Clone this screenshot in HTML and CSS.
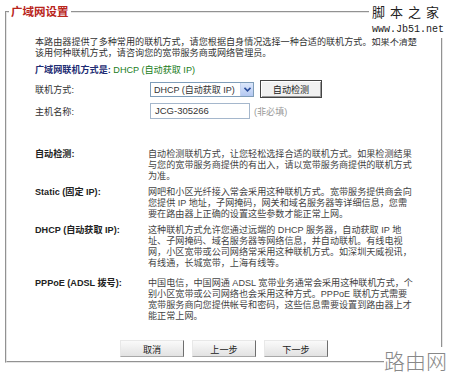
FILE: index.html
```html
<!DOCTYPE html>
<html lang="zh-CN">

<head>
    <meta charset="UTF-8">
    <link rel="stylesheet" href="styles.css">
</head>

<body>
    <div class="page">
        <fieldset class="panel">
            <legend class="panel-title">广域网设置</legend>

            <div class="panel-body">
                <p class="intro">本路由器提供了多种常用的联机方式，请您根据自身情况选择一种合适的联机方式。如果不清楚<br>该用何种联机方式，请咨询您的宽带服务商或网络管理员。</p>

                <div class="status">
                    <span class="status-label">广域网联机方式是:</span>
                    <span class="status-value">DHCP (自动获取 IP)</span>
                </div>

                <div class="form-row">
                    <label class="form-label">联机方式:</label>
                    <div class="select-box">
                        <span class="select-text">DHCP (自动获取 IP)</span>
                        <span class="select-arrow">
                            <svg width="7" height="5" viewBox="0 0 7 5"><path d="M0.5 0.8 L3.5 3.8 L6.5 0.8" fill="none" stroke="#2a4d9b" stroke-width="1.6"/></svg>
                        </span>
                    </div>
                    <button class="detect-button">自动检测</button>
                </div>

                <div class="form-row">
                    <label class="form-label">主机名称:</label>
                    <div class="text-box">JCG-305266</div>
                    <span class="hint">(非必填)</span>
                </div>

                <div class="help">
                    <div class="help-label">自动检测:</div>
                    <div class="help-text">自动检测联机方式，让您轻松选择合适的联机方式。如果检测结果<br>与您的宽带服务商提供的有出入，请以宽带服务商提供的联机方式<br>为准。</div>

                    <div class="help-label">Static (固定 IP):</div>
                    <div class="help-text">网吧和小区光纤接入常会采用这种联机方式。宽带服务提供商会向<br>您提供 IP 地址，子网掩码，网关和域名服务器等详细信息，您需<br>要在路由器上正确的设置这些参数才能正常上网。</div>

                    <div class="help-label">DHCP (自动获取 IP):</div>
                    <div class="help-text">这种联机方式允许您通过远端的 DHCP 服务器，自动获取 IP 地<br>址、子网掩码、域名服务器等网络信息，并自动联机。有线电视<br>网，小区宽带或公司网络常采用这种联机方式。如深圳天威视讯，<br>有线通，长城宽带，上海有线等。</div>

                    <div class="help-label help-last">PPPoE (ADSL 拨号):</div>
                    <div class="help-text help-last">中国电信，中国网通 ADSL 宽带业务通常会采用这种联机方式，个<br>别小区宽带或公司网络也会采用这种方式。PPPoE 联机方式需要<br>宽带服务商向您提供帐号和密码，这些信息需要设置到路由器上才<br>能正常上网。</div>
                </div>

                <div class="actions">
                    <button class="step-button">取消</button>
                    <button class="step-button">上一步</button>
                    <button class="step-button">下一步</button>
                </div>
            </div>
        </fieldset>

        <div class="mark-top">
            <div class="mark-name">脚本之家</div>
            <div class="mark-url">www.Jb51.net</div>
        </div>
        <div class="mark-bottom">路由网</div>
    </div>
</body>

</html>
```

FILE: styles.css
```css
body {
    margin: 0;
    background: #fff;
    font-family: "Liberation Sans", Arial, "Noto Sans CJK SC", sans-serif;
    font-size: 9.1px;
    color: #333;
}

.page {
    position: relative;
    width: 451px;
    height: 375px;
    padding: 5px 0 0 5px;
    box-sizing: border-box;
}

.panel {
    width: 438px;
    margin: 0;
    padding: 0 2px 4px 2px;
    box-sizing: border-box;
    border: 2px groove #e6e6e6;
}

.panel-title {
    padding: 0 2px;
    font-size: 11.5px;
    line-height: 14px;
    font-weight: bold;
    color: #b9261c;
}

.panel-body {
    display: flex;
    flex-direction: column;
    height: 338px;
    padding-left: 26px;
    box-sizing: border-box;
}

.intro {
    margin: 18px 0 0 0;
    line-height: 11px;
    white-space: nowrap;
}

.status {
    margin-top: 6px;
    line-height: 11px;
}

.status-label {
    font-weight: bold;
    color: #1d2c73;
}

.status-value {
    color: #1a7d1a;
}

.form-row {
    display: flex;
    align-items: center;
    height: 18px;
    margin-top: 4px;
}

.form-label {
    width: 115px;
    flex: none;
}

.select-box {
    display: flex;
    align-items: center;
    justify-content: space-between;
    width: 104px;
    height: 15px;
    padding-left: 3px;
    box-sizing: border-box;
    border: 1px solid #7f9db9;
    overflow: hidden;
}

.select-text {
    white-space: nowrap;
    font-size: 9px;
}

.select-arrow {
    display: flex;
    align-items: center;
    justify-content: center;
    flex: none;
    width: 12px;
    height: 13px;
    background: linear-gradient(#dce7fb, #b4c8f1);
    border-left: 1px solid #c4d3f0;
}

.detect-button {
    width: 62px;
    height: 18px;
    margin-left: 6px;
    padding: 0;
    font-family: inherit;
    font-size: 9.1px;
    color: #222;
    background: #f1f1f1;
    border: 1px solid #444;
    box-shadow: inset 1px 1px 0 #fff, inset -1px -1px 0 #999;
}

.text-box {
    width: 100px;
    height: 16px;
    padding-left: 4px;
    box-sizing: border-box;
    border: 1px solid #a5b7cc;
    font-size: 9.5px;
    line-height: 14px;
}

.hint {
    margin-left: 4px;
    color: #999;
}

.help {
    display: grid;
    grid-template-columns: 113px 1fr;
    row-gap: 5px;
    margin-top: 29px;
    line-height: 11px;
}

.help-label {
    font-weight: bold;
    color: #222;
}

.help-text {
    white-space: nowrap;
    color: #444;
}

.help-last {
    margin-top: 4px;
}

.actions {
    display: flex;
    justify-content: center;
    gap: 8px;
    margin: auto 0 0 -26px;
}

.step-button {
    width: 64px;
    height: 17px;
    padding: 0;
    font-family: inherit;
    font-size: 9.1px;
    color: #222;
    background: linear-gradient(#fafafa, #e2e2e2);
    border: 1px solid;
    border-color: #e8e8e8 #6e6e6e #a8a8a8 #e8e8e8;
}

/* site watermarks */
.mark-top {
    position: absolute;
    top: 0;
    right: 4px;
    width: 78px;
    height: 38px;
    background: #fff;
    text-align: center;
}

.mark-name {
    margin-top: 4px;
    font-family: "Noto Sans CJK SC", sans-serif;
    font-size: 13px;
    line-height: 15px;
    letter-spacing: 5px;
    color: #222;
}

.mark-url {
    margin-top: 5px;
    font-family: "Liberation Mono", monospace;
    font-size: 10px;
    line-height: 11px;
    color: #222;
}

.mark-bottom {
    position: absolute;
    right: 4px;
    bottom: 2px;
    font-family: "Noto Sans CJK SC", sans-serif;
    font-size: 21px;
    font-weight: 300;
    line-height: 26px;
    color: #888;
    background: #fff;
}
```
